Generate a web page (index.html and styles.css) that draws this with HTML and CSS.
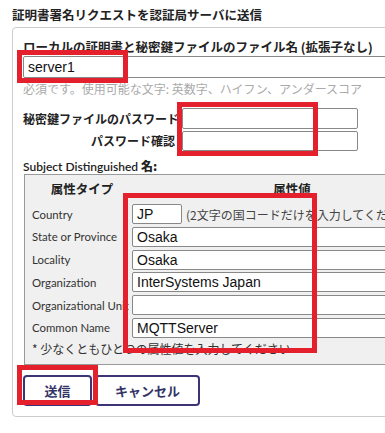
FILE: index.html
```html
<!DOCTYPE html>
<html lang="ja">
<head>
  <meta charset="UTF-8">
  <meta name="viewport" content="width=device-width, initial-scale=1">
  <title>証明書署名リクエスト</title>
  <link rel="stylesheet" href="styles.css">
</head>
<body>

  <h2 class="title">証明書署名リクエストを認証局サーバに送信</h2>

  <div class="panel">
    <div class="field-label">ローカルの証明書と秘密鍵ファイルのファイル名 (拡張子なし)</div>
    <input type="text" class="txt name-input" value="server1">
    <div class="hint">必須です。使用可能な文字: 英数字、ハイフン、アンダースコア</div>

    <div class="pw-grid">
      <label>秘密鍵ファイルのパスワード</label>
      <input type="password" class="txt pw">
      <label>パスワード確認</label>
      <input type="password" class="txt pw">
    </div>

    <div class="dn-label">Subject Distinguished <b>名:</b></div>

    <div class="dn-box">
      <div class="dn-head">
        <span>属性タイプ</span>
        <span>属性値</span>
      </div>
      <div class="dn-grid">
        <label>Country</label>
        <div class="country"><input type="text" class="txt cc" value="JP"><span>(2文字の国コードだけを入力してください)</span></div>
        <label>State or Province</label>
        <input type="text" class="txt dn" value="Osaka">
        <label>Locality</label>
        <input type="text" class="txt dn" value="Osaka">
        <label>Organization</label>
        <input type="text" class="txt dn" value="InterSystems Japan">
        <label>Organizational Unit</label>
        <input type="text" class="txt dn" value="">
        <label>Common Name</label>
        <input type="text" class="txt dn" value="MQTTServer">
      </div>
      <div class="note">* 少なくともひとつの属性値を入力してください</div>
    </div>

    <div class="buttons">
      <button class="btn send">送信</button>
      <button class="btn cancel">キャンセル</button>
    </div>
  </div>

  <!-- annotation boxes -->
  <div class="mark m1"></div>
  <div class="mark m2"></div>
  <div class="mark m3"></div>
  <div class="mark m4"></div>

</body>
</html>
```

FILE: styles.css
```css
* { box-sizing: border-box; }
html, body { overflow: hidden; }
body {
  margin: 0;
  position: relative;
  min-height: 433px;
  font-family: "Noto Sans CJK JP", "Noto Sans", sans-serif;
  color: #222;
  background: #fff;
}

.title {
  margin: 0;
  padding: 6px 12px 0;
  font-size: 12.5px;
  line-height: 17px;
  font-weight: bold;
  white-space: nowrap;
}

.panel {
  margin: 4px 0 0 12px;
  width: 420px;
  border: 1px solid #ccc;
  border-radius: 4px;
  padding: 10px 0 10px 10px;
}

.field-label {
  font-size: 12.5px;
  line-height: 17px;
  font-weight: bold;
  white-space: nowrap;
}

.txt {
  display: block;
  margin: 0;
  padding: 0 4px;
  font-family: "Liberation Sans", Arial, sans-serif;
  font-size: 14px;
  color: #111;
  background: #fff;
  border: 1px solid #888;
  border-radius: 2px;
  outline: none;
}

.name-input {
  margin-top: 1px;
  width: 400px;
  height: 22px;
}

.hint {
  margin-top: 3px;
  font-size: 12px;
  line-height: 16px;
  color: #aaa;
  white-space: nowrap;
}

.pw-grid {
  display: grid;
  grid-template-columns: 152px 176px;
  column-gap: 7px;
  row-gap: 2px;
  margin-top: 11px;
}
.pw-grid label {
  text-align: right;
  font-size: 12px;
  font-weight: bold;
  align-self: center;
  white-space: nowrap;
}
.pw { height: 20.5px; width: 176px; }

.dn-label {
  margin-top: 8px;
  font-family: "Lato", "Noto Sans CJK JP", sans-serif;
  font-size: 12px;
  line-height: 14px;
  font-weight: 600;
  color: #222;
}
.dn-label b { font-family: "Noto Sans CJK JP", sans-serif; }

.dn-box {
  margin-left: 1px;
  width: 440px;
  background: #f0f0f0;
  border: 1px solid #999;
  padding: 5px 0 7px 7px;
}

.dn-head {
  display: grid;
  grid-template-columns: 100px 320px;
  font-size: 12.5px;
  line-height: 17px;
  font-weight: bold;
  text-align: center;
  margin-bottom: 7px;
}

.dn-grid {
  display: grid;
  grid-template-columns: 100px 320px;
  grid-auto-rows: 20px;
  row-gap: 2.8px;
}
.dn-grid label {
  font-family: "Lato", sans-serif;
  font-size: 11.4px;
  align-self: center;
  white-space: nowrap;
  overflow: hidden;
  color: #333;
}
.dn { height: 20px; width: 320px; }

.country {
  display: flex;
  align-items: center;
  gap: 4px;
  white-space: nowrap;
  font-size: 12px;
  color: #444;
}
.cc { width: 50px; height: 20px; }

.note {
  margin-top: 3px;
  font-size: 12px;
  line-height: 16px;
  color: #333;
}

.buttons {
  display: flex;
  gap: 3px;
  margin-top: 10px;
}
.btn {
  height: 31px;
  background: #fff;
  border: 2px solid #3d3478;
  border-radius: 4px;
  font-family: "Noto Sans CJK JP", sans-serif;
  font-size: 13px;
  font-weight: bold;
  color: #333366;
  cursor: pointer;
}
.send { width: 69px; }
.cancel { width: 105px; }

.mark {
  position: absolute;
  border: 5px solid #e3202b;
}
.m1 { left: 17px; top: 50px; width: 111px; height: 33px; }
.m2 { left: 177px; top: 102px; width: 141px; height: 54px; }
.m3 { left: 123px; top: 193px; width: 194px; height: 160px; }
.m4 { left: 17px; top: 365px; width: 81px; height: 40px; }
```
